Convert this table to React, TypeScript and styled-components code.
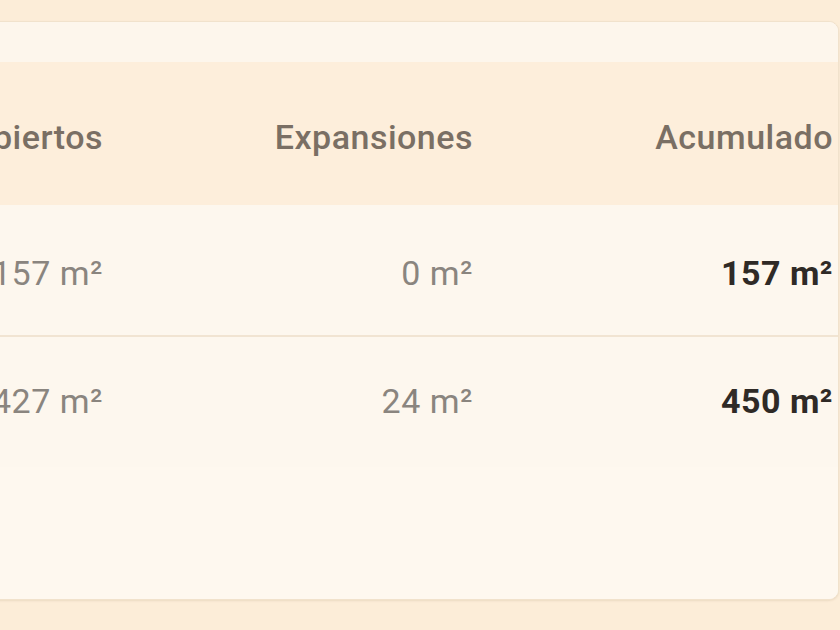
import styled, { createGlobalStyle } from 'styled-components'

type Row = {
  cubiertos: string
  expansiones: string
  acumulado: string
}

const ROWS: Row[] = [
  { cubiertos: '157 m²', expansiones: '0 m²', acumulado: '157 m²' },
  { cubiertos: '427 m²', expansiones: '24 m²', acumulado: '450 m²' }
]

const GlobalStyle = createGlobalStyle`
  *, *::before, *::after {
    box-sizing: border-box;
  }

  body {
    margin: 0;
    background: #fcedd8;
    font-family: Roboto, 'Liberation Sans', sans-serif;
    overflow: hidden;
  }
`

function App() {
  return (
    <>
      <GlobalStyle />
      <Page>
        <Card>
          <TopStrip />
          <Table>
            <HeadCell>Cubiertos</HeadCell>
            <HeadCell>Expansiones</HeadCell>
            <HeadCell $edge>Acumulado</HeadCell>
            {ROWS.map((row, i) => {
              const last = i === ROWS.length - 1
              return (
                <RowGroup key={row.acumulado} $last={last}>
                  <Cell $last={last}>{row.cubiertos}</Cell>
                  <Cell $last={last}>{row.expansiones}</Cell>
                  <Cell $last={last} $strong $edge>
                    {row.acumulado}
                  </Cell>
                </RowGroup>
              )
            })}
          </Table>
          <Filler />
        </Card>
      </Page>
    </>
  )
}

const Page = styled.main`
  width: 840px;
  height: 630px;
  padding-top: 21px;
  overflow: hidden;
`

const Card = styled.section`
  margin-left: -300px;
  width: 1139px;
  height: 579px;
  background: #fef8ef;
  border: 1px solid #f1e2cc;
  border-radius: 10px;
  overflow: hidden;
  display: flex;
  flex-direction: column;
  box-shadow: 0 1px 2px rgba(150, 120, 80, 0.15);
`

const TopStrip = styled.div`
  height: 40px;
  background: #fdf6ec;
`

const Table = styled.div`
  display: grid;
  grid-template-columns: 1fr 370px 365px;
  background: #fdf7ee;
  letter-spacing: 0.5px;
`

const HeadCell = styled.div<{ $edge?: boolean }>`
  height: 143px;
  display: flex;
  align-items: center;
  justify-content: flex-end;
  padding-top: 6px;
  padding-right: ${(p) => (p.$edge ? '5px' : '0')};
  background: #fdeedb;
  font-size: 34px;
  font-weight: 500;
  color: #7a6f64;
`

const RowGroup = styled.div<{ $last: boolean }>`
  display: contents;
  & > div {
    border-bottom: ${(p) => (p.$last ? 'none' : '2px solid #f1e4d2')};
  }
`

const Cell = styled.div<{ $strong?: boolean; $edge?: boolean; $last?: boolean }>`
  height: ${(p) => (p.$last ? '130px' : '132px')};
  display: flex;
  align-items: center;
  justify-content: flex-end;
  padding-top: ${(p) => (p.$last ? '0' : '5px')};
  padding-bottom: ${(p) => (p.$last ? '2px' : '0')};
  padding-right: ${(p) => (p.$edge ? '5px' : '0')};
  font-size: 34px;
  font-weight: ${(p) => (p.$strong ? 700 : 400)};
  color: ${(p) => (p.$strong ? '#2f2a26' : '#8a857f')};
`

const Filler = styled.div`
  flex: 1;
  background: #fef8ef;
`

export default App
